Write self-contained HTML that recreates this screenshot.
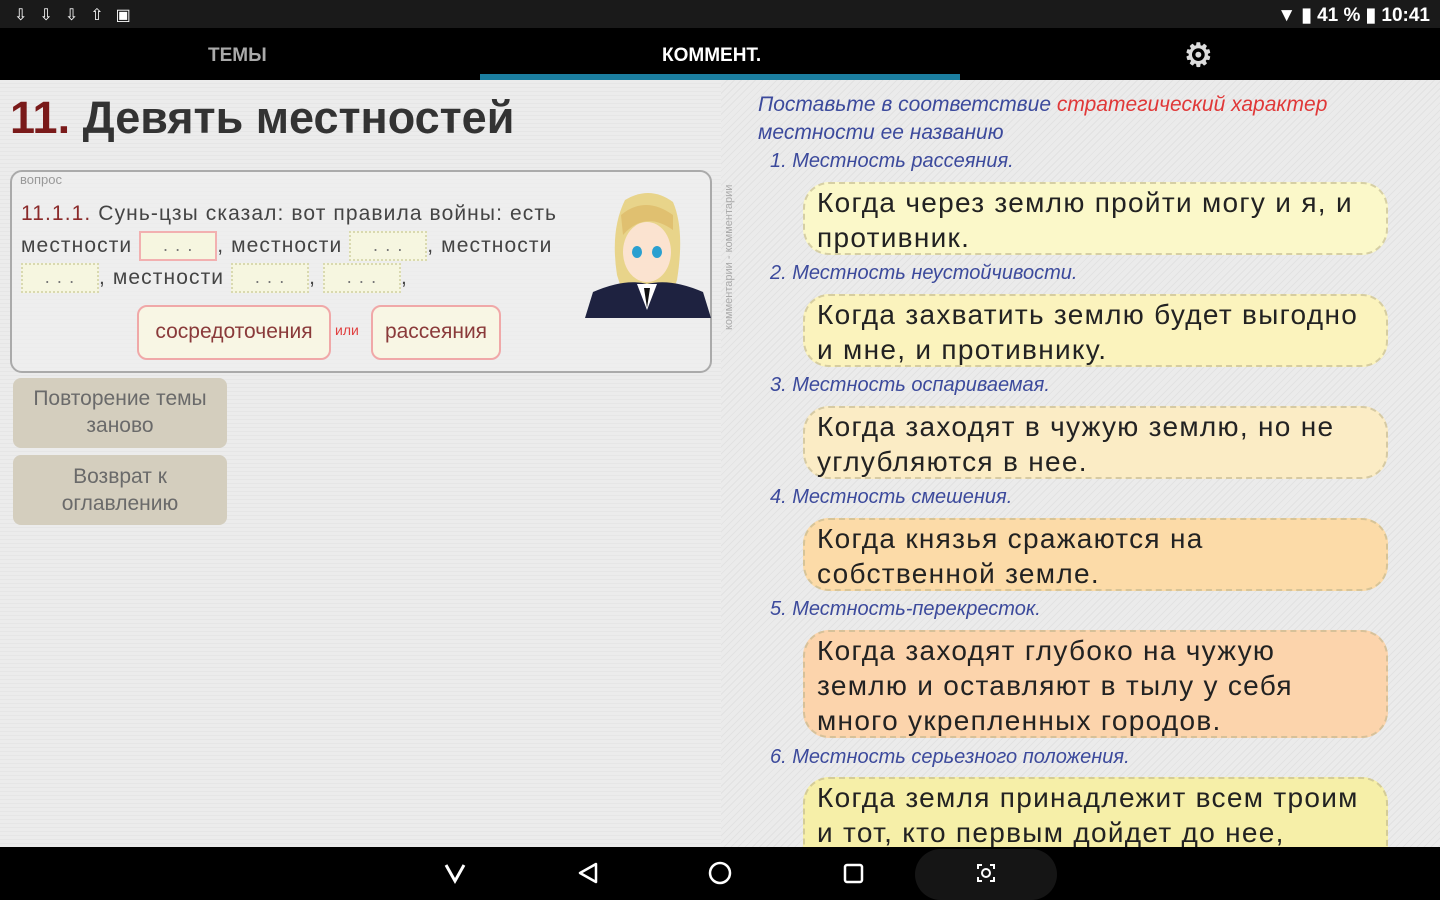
<!DOCTYPE html>
<html><head><meta charset="utf-8"><style>
*{margin:0;padding:0;box-sizing:border-box}
body{width:1440px;height:900px;overflow:hidden;font-family:"Liberation Sans",sans-serif;background:#ececec;position:relative}
.a{position:absolute}
#sb{left:0;top:0;width:1440px;height:28px;background:#1a1a1a;color:#fff}
#tb{left:0;top:28px;width:1440px;height:52px;background:#000;color:#fff;font-weight:bold;font-size:19px}
#ind{left:480px;top:74px;width:480px;height:6px;background:#1b7ea0}
#left{left:0;top:80px;width:721px;height:767px;background:repeating-linear-gradient(0deg,#ececec 0 3px,#e6e6e6 3px 4px)}
#right{left:721px;top:80px;width:719px;height:767px;background:repeating-linear-gradient(135deg,#ebebeb 0 4px,#e2e2e2 4px 5px)}
#nav{left:0;top:847px;width:1440px;height:53px;background:#000}
.lbl{font-style:italic;color:#3c4a9c;font-size:20px;left:770px}
.bub{left:803px;width:585px;border-radius:26px;border:2px dashed rgba(190,180,140,.6);font-size:28px;color:#222;padding:0 12px;line-height:35px;letter-spacing:1.3px;white-space:nowrap}
.blank{display:inline-block;width:78px;height:30px;border:2px dotted #d9d9b0;background:#f6f6e0;vertical-align:middle;text-align:center;line-height:24px;color:#777;font-size:18px}
.btn{left:13px;width:214px;background:#d4cebe;border-radius:8px;color:#6a6a6a;font-size:21px;text-align:center;line-height:27px}
</style></head><body>
<div id="sb" class="a">
 <div class="a" style="left:14px;top:5px;font-size:16px;letter-spacing:12px">⇩⇩⇩⇧▣</div>
 <div class="a" style="right:10px;top:4px;font-size:19px;font-weight:bold">▼ ▮ 41 % ▮ 10:41</div>
</div>
<div id="tb" class="a">
 <div class="a" style="left:208px;top:17px;color:#aaa">ТЕМЫ</div>
 <div class="a" style="left:662px;top:17px">КОММЕНТ.</div>
 <div class="a" style="left:1184px;top:8px;font-size:32px;color:#ddd">⚙</div>
</div>
<div id="ind" class="a"></div>
<div id="left" class="a">
 <div class="a" style="left:10px;top:12px;font-size:45px;font-weight:bold;color:#333"><span style="color:#7a1a1a">11.</span> Девять местностей</div>
 <div class="a" style="left:10px;top:90px;width:702px;height:203px;border:2px solid #aaa;border-radius:12px;background:rgba(240,240,240,.6)">
  <div class="a" style="left:8px;top:0;font-size:13px;color:#999">вопрос</div>
  <div class="a" style="left:9px;top:26px;width:580px;font-size:21px;color:#444;line-height:32px;letter-spacing:1.1px;white-space:nowrap"><span style="color:#8a2a2a">11.1.1.</span> Сунь-цзы сказал: вот правила войны: есть<br>местности <span class="blank" style="border:2px solid #f2b0b0">. . .</span>, местности <span class="blank">. . .</span>, местности<br><span class="blank">. . .</span>, местности <span class="blank">. . .</span>, <span class="blank">. . .</span>,</div>
  <div class="a" style="left:125px;top:133px;width:194px;height:55px;border:2px solid #f0a8a8;border-radius:10px;background:#f8f6e4;font-size:21px;color:#8a3a3a;text-align:center;line-height:50px">сосредоточения</div>
  <div class="a" style="left:323px;top:150px;font-size:14px;color:#e04040">или</div>
  <div class="a" style="left:359px;top:133px;width:130px;height:55px;border:2px solid #f0a8a8;border-radius:10px;background:#f8f6e4;font-size:21px;color:#8a3a3a;text-align:center;line-height:50px">рассеяния</div>
  <div class="a" style="left:573px;top:18px;width:126px;height:128px">
   <svg width="126" height="128"><path d="M40 10 Q65 -5 88 12 Q100 40 92 90 L85 110 L40 110 L32 85 Q25 40 40 10Z" fill="#e8d48a"/><ellipse cx="62" cy="62" rx="24" ry="30" fill="#fbe3d0"/><path d="M38 45 Q60 20 88 40 L88 25 Q60 5 36 25Z" fill="#e0c070"/><ellipse cx="52" cy="62" rx="5" ry="6" fill="#2aa0d0"/><ellipse cx="72" cy="62" rx="5" ry="6" fill="#2aa0d0"/><path d="M0 128 L8 102 Q40 88 62 94 Q86 88 118 102 L126 128Z" fill="#1e2240"/><path d="M52 94 L62 120 L72 94Z" fill="#fff"/><path d="M59 98 L62 118 L65 98Z" fill="#111"/></svg>
  </div>
 </div>
 <div class="a btn" style="top:298px;height:70px;padding-top:7px">Повторение темы заново</div>
 <div class="a btn" style="top:375px;height:70px;padding-top:8px">Возврат к оглавлению</div>
</div>
<div id="right" class="a">
 <div class="a" style="left:2px;top:20px;width:16px;height:230px;writing-mode:vertical-rl;transform:rotate(180deg);font-size:11px;color:#aaa">комментарии - комментарии</div>
</div>
<div class="a" style="left:758px;top:91px;font-size:21px;font-style:italic;color:#3c4a9c;line-height:28px">Поставьте в соответствие <span style="color:#e03838">стратегический характер</span><br>местности ее названию</div>
<div class="a lbl" style="top:150px">1. Местность рассеяния.</div>
<div class="a bub" style="top:182px;height:73px;background:#fbf8c9;padding-top:1px">Когда через землю пройти могу и я, и<br>противник.</div>
<div class="a lbl" style="top:262px">2. Местность неустойчивости.</div>
<div class="a bub" style="top:294px;height:73px;background:#fbf3bd;padding-top:1px">Когда захватить землю будет выгодно<br>и мне, и противнику.</div>
<div class="a lbl" style="top:374px">3. Местность оспариваемая.</div>
<div class="a bub" style="top:406px;height:73px;background:#fbecc5;padding-top:1px">Когда заходят в чужую землю, но не<br>углубляются в нее.</div>
<div class="a lbl" style="top:486px">4. Местность смешения.</div>
<div class="a bub" style="top:518px;height:73px;background:#fcdba8;padding-top:1px">Когда князья сражаются на<br>собственной земле.</div>
<div class="a lbl" style="top:598px">5. Местность-перекресток.</div>
<div class="a bub" style="top:630px;height:108px;background:#fcd4ac;padding-top:1px">Когда заходят глубоко на чужую<br>землю и оставляют в тылу у себя<br>много укрепленных городов.</div>
<div class="a lbl" style="top:746px">6. Местность серьезного положения.</div>
<div class="a bub" style="top:777px;height:100px;background:#f6efa8;padding-top:1px">Когда земля принадлежит всем троим<br>и тот, кто первым дойдет до нее,</div>
<div id="nav" class="a">
 <div class="a" style="left:915px;top:2px;width:142px;height:51px;border-radius:26px;background:#151515"></div>
 <svg class="a" style="left:0;top:0" width="1440" height="53">
  <path d="M446 18 L455 34 L464 18" stroke="#fff" stroke-width="3" fill="none"/>
  <path d="M596 17 L580 26 L596 35Z" stroke="#fff" stroke-width="2.5" fill="none" stroke-linejoin="round"/>
  <circle cx="720" cy="26" r="10" stroke="#fff" stroke-width="2.5" fill="none"/>
  <rect x="845" y="18" width="17" height="17" rx="2" stroke="#fff" stroke-width="2.5" fill="none"/>
  <path d="M978 22 V18 H982 M990 18 H994 V22 M994 30 V34 H990 M982 34 H978 V30" stroke="#fff" stroke-width="2" fill="none"/>
  <circle cx="986" cy="26" r="4" stroke="#fff" stroke-width="2" fill="none"/>
 </svg>
</div>
</body></html>
